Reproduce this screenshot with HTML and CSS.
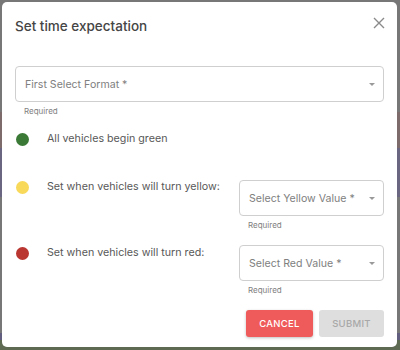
FILE: index.html
```html
<!DOCTYPE html>
<html lang="en">
<head>
  <meta charset="UTF-8" />
  <title>Set time expectation</title>
  <link rel="stylesheet" href="styles.css">
</head>
<body>
  <div class="dialog">
    <div class="dialog-header">
      <h1>Set time expectation</h1>
      <button class="close-btn" aria-label="Close">
        <svg width="12" height="12" viewBox="0 0 12 12">
          <path d="M1 1 L11 11 M11 1 L1 11" stroke="#8a8a8a" stroke-width="1.4" fill="none" />
        </svg>
      </button>
    </div>

    <div class="field field-full">
      <div class="select-box">
        <span class="placeholder">First Select Format *</span>
        <span class="arrow"></span>
      </div>
      <div class="helper">Required</div>
    </div>

    <div class="color-row row-green">
      <span class="dot dot-green"></span>
      <span class="label">All vehicles begin green</span>
    </div>

    <div class="color-row row-yellow">
      <span class="dot dot-yellow"></span>
      <span class="label">Set when vehicles will turn yellow:</span>
      <div class="field field-side">
        <div class="select-box">
          <span class="placeholder">Select Yellow Value *</span>
          <span class="arrow"></span>
        </div>
        <div class="helper">Required</div>
      </div>
    </div>

    <div class="color-row row-red">
      <span class="dot dot-red"></span>
      <span class="label">Set when vehicles will turn red:</span>
      <div class="field field-side field-red">
        <div class="select-box">
          <span class="placeholder">Select Red Value *</span>
          <span class="arrow"></span>
        </div>
        <div class="helper">Required</div>
      </div>
    </div>

    <div class="actions">
      <button class="btn btn-cancel">Cancel</button>
      <button class="btn btn-submit" disabled>Submit</button>
    </div>
  </div>
</body>
</html>
```

FILE: styles.css
```css
html, body {
  margin: 0;
  padding: 0;
  height: 100%;
  overflow: hidden;
}

body {
  font-family: Inter, 'Noto Sans', sans-serif;
  background: linear-gradient(to bottom,
    #777 0px, #777 112px,
    #7d6a6a 112px, #7d6a6a 148px,
    #6a6580 148px, #6a6580 197px,
    #777 197px, #777 333px,
    #625e80 333px, #625e80 340px,
    #5f6a52 340px);
  padding: 2px 3px 3px 2px;
  box-sizing: border-box;
}

.dialog {
  background: #fff;
  border-radius: 5px;
  height: 345px;
  padding: 13px 13px 0 13px;
  box-sizing: border-box;
  color: #444;
}

.dialog-header {
  display: flex;
  justify-content: space-between;
  align-items: flex-start;
}

h1 {
  margin: 0;
  font-size: 13.5px;
  font-weight: 500;
  line-height: 22px;
  color: #454545;
}

.close-btn {
  background: none;
  border: none;
  padding: 0;
  margin: 2px -1px 0 0;
  width: 12px;
  height: 12px;
  cursor: pointer;
  display: flex;
}

.field-full {
  margin-top: 29px;
}

.select-box {
  height: 36px;
  border: 1px solid #cfcfcf;
  border-radius: 4px;
  box-sizing: border-box;
  display: flex;
  align-items: center;
  justify-content: space-between;
  padding: 0 8px 0 9px;
}

.placeholder {
  font-size: 10.6px;
  color: #808080;
  white-space: nowrap;
}

.arrow {
  width: 0;
  height: 0;
  border-left: 3.5px solid transparent;
  border-right: 3.5px solid transparent;
  border-top: 3.5px solid #999;
  margin-top: 1px;
}

.helper {
  font-size: 8px;
  line-height: 12px;
  color: #808080;
  margin-top: 3px;
  padding-left: 9px;
}

.color-row {
  display: flex;
  align-items: flex-start;
  padding-left: 1px;
}

.dot {
  width: 13px;
  height: 13px;
  border-radius: 50%;
  flex-shrink: 0;
  margin-top: 2.5px;
}

.dot-green { background: #3b7a36; }
.dot-yellow { background: #f8d95a; }
.dot-red { background: #b93631; }

.label {
  font-size: 10.7px;
  line-height: 18px;
  color: #585858;
  margin-left: 18px;
  white-space: nowrap;
}

.row-green {
  margin-top: 13px;
}

.row-yellow {
  margin-top: 30px;
}

.row-red {
  margin-top: 13px;
}

.field-side {
  margin-left: auto;
  width: 145px;
  margin-top: 2px;
}

.field-red {
  margin-top: 1px;
}

.actions {
  display: flex;
  justify-content: flex-end;
  gap: 6px;
  margin-top: 14px;
}

.btn {
  height: 27px;
  border: none;
  border-radius: 3px;
  font-family: inherit;
  font-size: 9.5px;
  font-weight: 500;
  text-transform: uppercase;
  letter-spacing: 0.3px;
  padding: 0;
}

.btn-cancel {
  width: 67px;
  background: #ef5a5a;
  color: #fff;
  box-shadow: 0 1px 3px rgba(0, 0, 0, 0.25);
  cursor: pointer;
}

.btn-submit {
  width: 65px;
  background: #dedede;
  color: #a8a8a8;
}
```
